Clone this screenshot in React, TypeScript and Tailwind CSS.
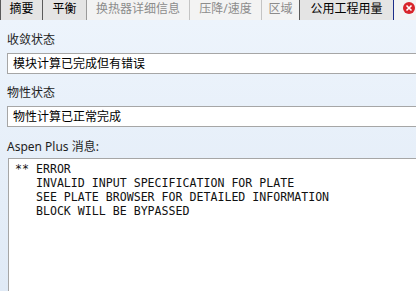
import React from 'react';

const cjk = { fontFamily: '"Noto Sans", "Noto Sans CJK SC", sans-serif' };
const mono = { fontFamily: '"DejaVu Sans Mono", "Liberation Mono", monospace' };

type Tab = { label: string; w: string; disabled?: boolean; edge: string };

const tabs: Tab[] = [
  { label: '摘要', w: 'w-[42px]', edge: 'border-[#5a5a5a]' },
  { label: '平衡', w: 'w-[44px]', edge: 'border-[#5a5a5a]' },
  { label: '换热器详细信息', w: 'w-[103px]', disabled: true, edge: 'border-[#9a9a9a]' },
  { label: '压降/速度', w: 'w-[72px]', disabled: true, edge: 'border-[#c4c4c4]' },
  { label: '区域', w: 'w-[38px]', disabled: true, edge: 'border-[#c4c4c4]' },
  { label: '公用工程用量', w: 'w-[94px]', edge: 'border-[#5a5a5a]' },
];

const messages = [
  '** ERROR',
  '   INVALID INPUT SPECIFICATION FOR PLATE',
  '   SEE PLATE BROWSER FOR DETAILED INFORMATION',
  '   BLOCK WILL BE BYPASSED',
];

const Field = ({ label, value, top }: { label: string; value: string; top: string }) => (
  <>
    <div className={`${top} pl-[7px] h-[16px] leading-[16px] text-[12px] text-[#1e1e1e]`}>{label}</div>
    <div className="mt-[5px] ml-[7px] w-[420px] h-[21px] bg-white border-t border-l border-b border-[#a6a6a6] pl-[5px] text-[12px] leading-[19px] text-black">
      {value}
    </div>
  </>
);

export default function App() {
  return (
    <div className="w-[416px] h-[291px] overflow-hidden flex flex-col bg-[#e6eff9]" style={cjk}>
      {/* tab strip */}
      <div className="flex h-[20px] shrink-0 bg-[#c9d9ec]">
        <div className="w-[10px]" />
        {tabs.map((t) => (
          <div
            key={t.label}
            className={`${t.w} shrink-0 border-l ${t.edge} flex items-center justify-center text-[12px] leading-none pb-[3px] ${
              t.disabled ? 'bg-[#f3f3f3] text-[#8c8c8c]' : 'bg-[#e4e4e4] text-black'
            }`}
          >
            {t.label}
          </div>
        ))}
        <div className="w-[10px] shrink-0 border-l border-[#1c2e8a] bg-[#f3f3f3]" />
        <div className="w-[20px] shrink-0 bg-[#f3f3f3] flex items-start pt-[2px]">
          <svg width="12" height="12" viewBox="0 0 12 12" className="shrink-0">
            <circle cx="6" cy="6" r="6" fill="#d8242a" />
            <path d="M3.5 3.5 L8.5 8.5 M8.5 3.5 L3.5 8.5" stroke="#fff" strokeWidth="1.6" />
          </svg>
        </div>
      </div>

      {/* content */}
      <div className="flex-1 flex flex-col bg-gradient-to-b from-[#edf4fc] to-[#e0eaf6]">
        <Field label="收敛状态" value="模块计算已完成但有错误" top="mt-[12px]" />
        <Field label="物性状态" value="物性计算已正常完成" top="mt-[11px]" />
        <div className="mt-[12px] pl-[7px] h-[16px] leading-[16px] text-[12px] text-[#1e1e1e]">Aspen Plus 消息:</div>
        <div className="mt-[3px] ml-[8px] flex-1 bg-white border-t border-l border-[#a6a6a6] pl-[6px] pt-[3px]">
          {messages.map((m) => (
            <div key={m} className="text-[11.6px] leading-[14px] text-[#111] whitespace-pre" style={mono}>
              {m}
            </div>
          ))}
        </div>
      </div>
    </div>
  );
}
